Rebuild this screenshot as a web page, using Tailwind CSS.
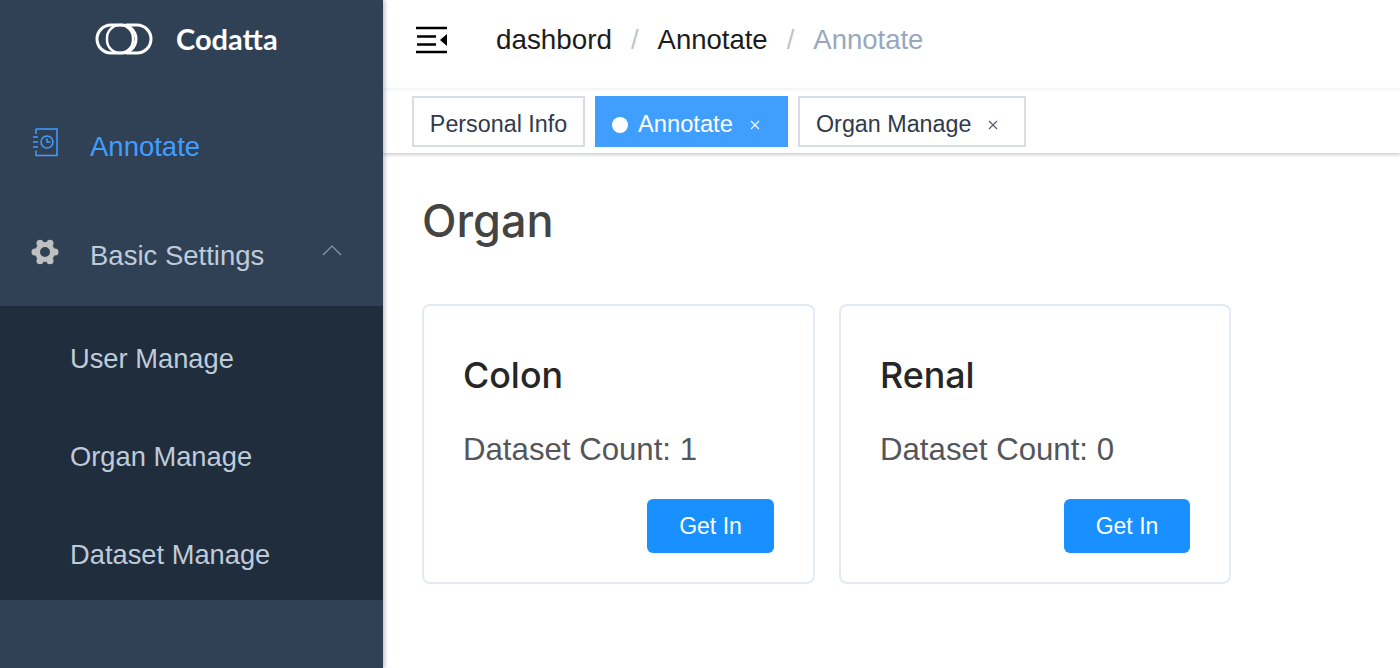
<!DOCTYPE html>
<html lang="en">
<head>
    <meta charset="UTF-8">
    <title>Codatta</title>
    <script src="https://cdn.jsdelivr.net/npm/@tailwindcss/browser@4"></script>
</head>
<body class="h-[668px] overflow-hidden bg-white font-['Liberation_Sans',sans-serif]">
    <div class="flex h-[668px]">
        <!-- Sidebar -->
        <aside class="relative z-10 w-[383px] shrink-0 bg-[#304156] shadow-[2px_0_4px_rgba(0,21,41,0.25)]">
            <div class="flex h-[78px] items-center pl-[95px]">
                <svg width="58" height="34" viewBox="0 0 58 34" fill="none" stroke="white" stroke-width="3">
                    <rect x="2" y="3" width="39" height="28" rx="14"></rect>
                    <rect x="12" y="3" width="26" height="28" rx="13" stroke-width="2.5"></rect>
                    <path d="M31 3h11a14 14 0 0 1 0 28h-11"></path>
                </svg>
                <span class="ml-[23px] -mt-[2px] font-['Lato',sans-serif] text-[29px] leading-none font-bold text-white">Codatta</span>
            </div>
            <div class="mt-[14px] flex h-[108px] items-center pt-[2px] pl-[33px] text-[27.5px] text-[#409eff]">
                <svg class="-mt-[9px]" width="25" height="29" viewBox="0 0 25 29" fill="none" stroke="#409eff" stroke-width="1.5">
                    <path d="M3 1h21v26.500h-21v-5M3 1v5"></path>
                    <circle cx="14" cy="14" r="6"></circle>
                    <path d="M14 10.500v3.500h3.500M0 9h5M0 14h5M0 19h5"></path>
                </svg>
                <span class="ml-[32px]">Annotate</span>
            </div>
            <div class="flex h-[106px] items-center pt-[6px] pl-[31px] pr-[41px] text-[27.5px] text-[#bfcbd9]">
                <svg class="-mt-[8px]" width="28" height="28" viewBox="0 0 28 28" fill="#c0c0c0">
                    <circle cx="14" cy="14" r="7.500" fill="none" stroke="#c0c0c0" stroke-width="5"></circle>
                    <circle cx="24" cy="14" r="3.500"></circle>
                    <circle cx="19" cy="22.700" r="3.500"></circle>
                    <circle cx="9" cy="22.700" r="3.500"></circle>
                    <circle cx="4" cy="14" r="3.500"></circle>
                    <circle cx="9" cy="5.300" r="3.500"></circle>
                    <circle cx="19" cy="5.300" r="3.500"></circle>
                </svg>
                <span class="ml-[31px] flex-1">Basic Settings</span>
                <svg class="-mt-[12px]" width="20" height="12" viewBox="0 0 20 12" fill="none" stroke="#8d99a8" stroke-width="1.200">
                    <path d="M1 11l9-9 9 9"></path>
                </svg>
            </div>
            <ul class="h-[294px] bg-[#1f2d3d] pl-[70px] text-[27.3px] text-[#bfcbd9]">
                <li class="flex h-[98px] items-center pt-[8px]">User Manage</li>
                <li class="flex h-[98px] items-center pt-[8px]">Organ Manage</li>
                <li class="flex h-[98px] items-center pt-[8px]">Dataset Manage</li>
            </ul>
        </aside>

        <!-- Main -->
        <main class="min-w-0 flex-1">
            <header class="flex h-[88px] items-center pb-[8px] pl-[33px] text-[27.5px] shadow-[0_1px_4px_rgba(0,21,41,0.08)]">
                <svg width="31" height="28" viewBox="0 0 31 28" fill="none" stroke="black" stroke-width="2.500">
                    <path d="M0 2h31M1 10.500h19M1 18.500h19M0 26h31"></path>
                    <path d="M31 8v12l-7-6z" fill="black" stroke="none"></path>
                </svg>
                <span class="ml-[49px] text-[27.8px] text-[#1c1c1c]">dashbord</span>
                <span class="mx-[19px] text-[#c0c4cc]">/</span>
                <span class="text-[#1c1c1c]">Annotate</span>
                <span class="mx-[19px] text-[#c0c4cc]">/</span>
                <span class="text-[#97a8be]">Annotate</span>
            </header>
            <nav class="flex h-[65px] gap-[10px] pt-[8px] pl-[29px] text-[23.3px] shadow-[0_2px_3px_rgba(0,21,41,0.2)]">
                <div class="flex h-[51px] w-[173px] items-center justify-center border-2 border-[#d8dce5] pt-[6px] text-[#303a4b]">Personal Info</div>
                <div class="flex h-[51px] w-[193px] items-center border-2 border-[#409eff] bg-[#409eff] pt-[6px] pl-[15px] text-[23.7px] text-white">
                    <span class="size-[16px] rounded-full bg-white"></span>
                    <span class="ml-[10px]">Annotate</span>
                    <svg class="ml-[17px]" width="10" height="10" viewBox="0 0 10 10" stroke="white" stroke-width="1.100"><path d="M1 1l8 8M9 1l-8 8"></path></svg>
                </div>
                <div class="flex h-[51px] w-[228px] items-center border-2 border-[#d8dce5] pt-[6px] pl-[16px] text-[#303a4b]">
                    <span>Organ Manage</span>
                    <svg class="ml-[17px]" width="10" height="10" viewBox="0 0 10 10" stroke="#555c6a" stroke-width="1.100"><path d="M1 1l8 8M9 1l-8 8"></path></svg>
                </div>
            </nav>
            <section class="pt-[38px] pl-[39px]">
                <h1 class="font-['Inter',sans-serif] text-[45px] leading-[60px] font-medium text-[#444444]">Organ</h1>
                <div class="mt-[53px] flex gap-[24px]">
                    <div class="h-[280px] w-[393px] rounded-[8px] border-2 border-[#e3eaf5] px-[39px]">
                        <h2 class="mt-[45px] font-['Inter',sans-serif] text-[35.8px] leading-[48px] font-medium text-[#262626]">Colon</h2>
                        <p class="mt-[31px] text-[31.2px] leading-[40px] text-[#54565a]">Dataset Count: 1</p>
                        <div class="mt-[29px] flex justify-end">
                            <button class="h-[54px] w-[127px] rounded-[6px] bg-[#1890ff] text-[23px] text-white">Get In</button>
                        </div>
                    </div>
                    <div class="h-[280px] w-[392px] rounded-[8px] border-2 border-[#e3eaf5] px-[39px]">
                        <h2 class="mt-[45px] font-['Inter',sans-serif] text-[35.8px] leading-[48px] font-medium text-[#262626]">Renal</h2>
                        <p class="mt-[31px] text-[31.2px] leading-[40px] text-[#54565a]">Dataset Count: 0</p>
                        <div class="mt-[29px] flex justify-end">
                            <button class="h-[54px] w-[126px] rounded-[6px] bg-[#1890ff] text-[23px] text-white">Get In</button>
                        </div>
                    </div>
                </div>
            </section>
        </main>
    </div>
</body>
</html>
